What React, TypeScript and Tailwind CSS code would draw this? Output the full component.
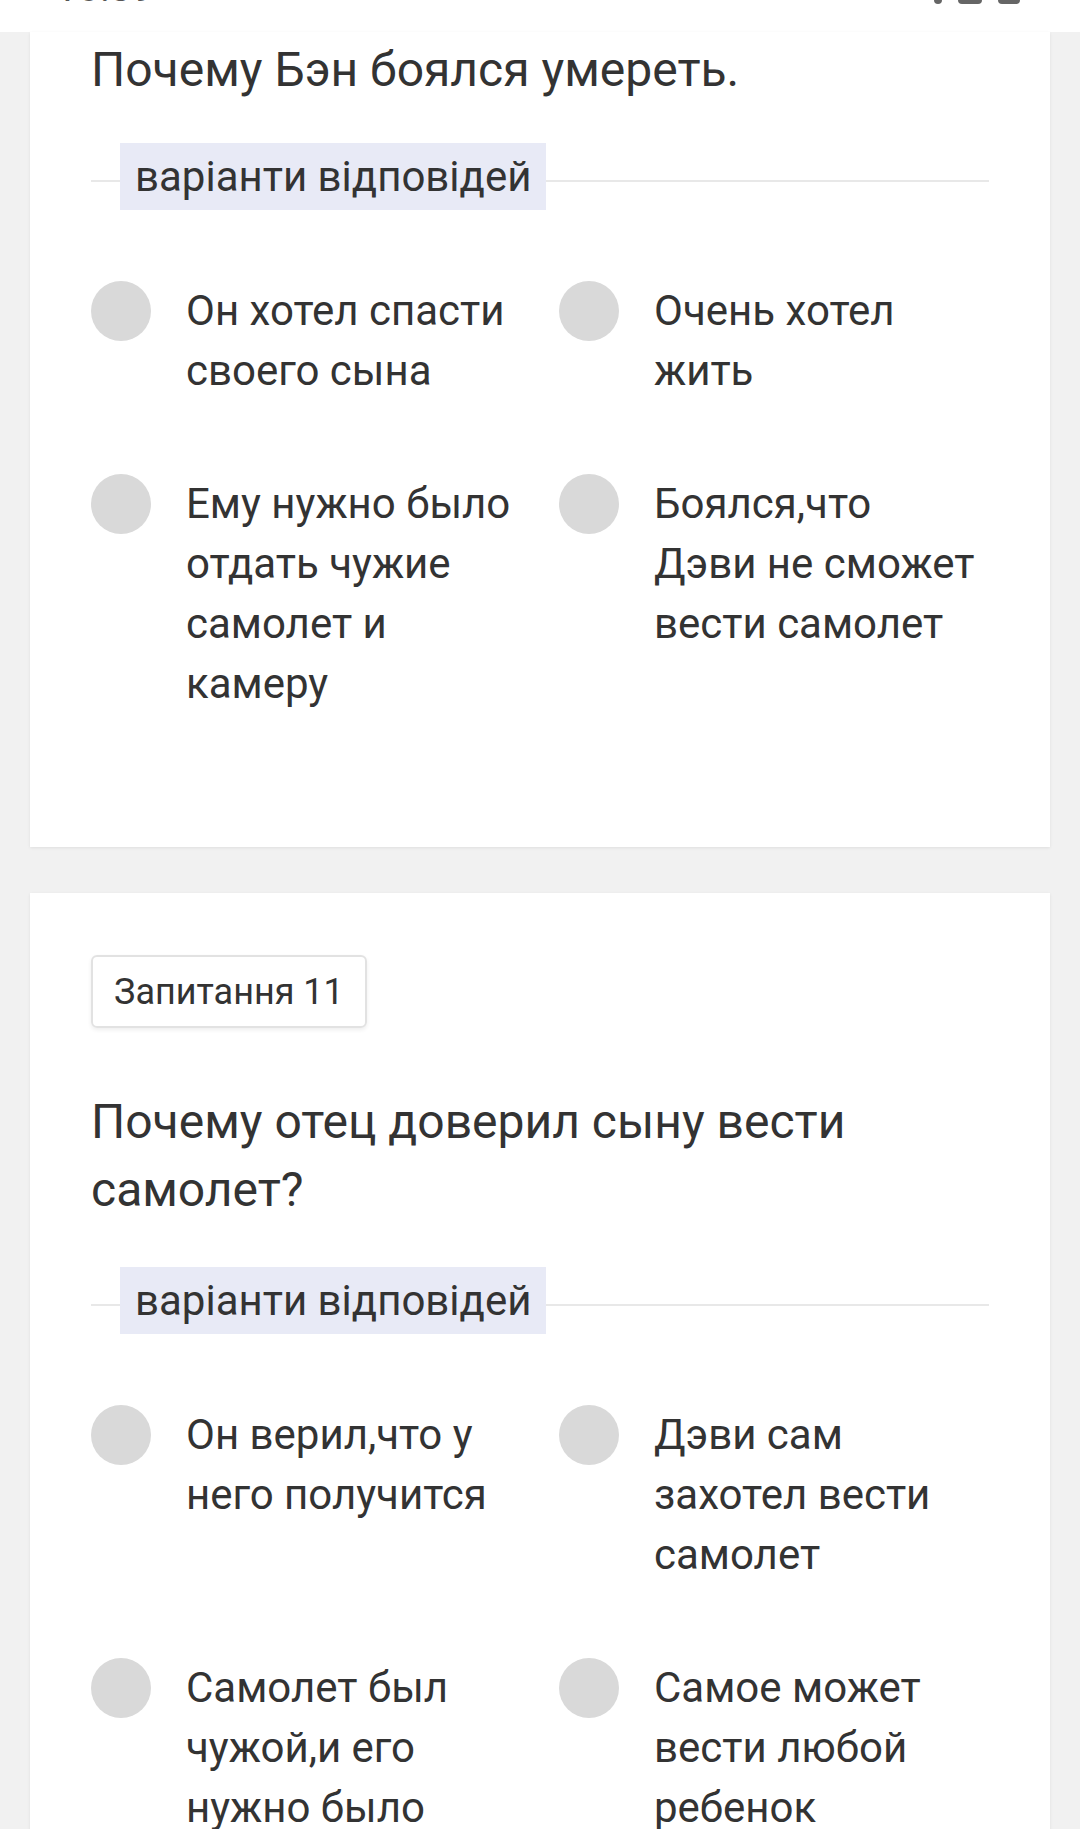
import React from 'react';

type Question = {
  badge?: string;
  title: string;
  options: string[];
};

const questions: Question[] = [
  {
    title: 'Почему Бэн боялся умереть.',
    options: [
      'Он хотел спасти своего сына',
      'Очень хотел жить',
      'Ему нужно было отдать чужие самолет и камеру',
      'Боялся,что Дэви не сможет вести самолет',
    ],
  },
  {
    badge: 'Запитання 11',
    title: 'Почему отец доверил сыну вести самолет?',
    options: [
      'Он верил,что у него получится',
      'Дэви сам захотел вести самолет',
      'Самолет был чужой,и его нужно было вернуть',
      'Самое может вести любой ребенок',
    ],
  },
];

function StatusBar() {
  return (
    <div className="h-[32px] bg-white overflow-hidden flex justify-between pl-[55px] pr-[60px]">
      <span className="text-[40px] leading-none text-[#555] -mt-[32px]">10:39</span>
      <div className="flex items-start gap-[16px] -mt-[12px]">
        <div className="w-[8px] h-[16px] bg-[#666] rounded-sm" />
        <div className="w-[24px] h-[16px] bg-[#666] rounded-sm" />
        <div className="w-[22px] h-[16px] bg-[#666] rounded-sm" />
      </div>
    </div>
  );
}

function Divider() {
  return (
    <div className="relative h-[67px]">
      <div className="absolute left-0 right-0 top-[37px] h-[2px] bg-[#e8e8e8]" />
      <div className="absolute left-[29px] top-0 h-[67px] bg-[#e8eaf6] px-[15px] flex items-center text-[42px] text-[#333]">
        варіанти відповідей
      </div>
    </div>
  );
}

function Option({ text, left }: { text: string; left: boolean }) {
  return (
    <div className="flex items-start gap-[35px]">
      <div className="w-[60px] h-[60px] rounded-full bg-[#d9d9d9] shrink-0" />
      <div className={`${left ? 'w-[345px]' : 'w-[323px]'} text-[42px] leading-[60px] text-[#333]`}>{text}</div>
    </div>
  );
}

function QuestionCard({ q, first }: { q: Question; first?: boolean }) {
  return (
    <div
      className={`bg-white mx-[30px] px-[61px] shadow-[0_1px_3px_rgba(0,0,0,0.08)] ${
        first ? 'pt-[4px]' : 'pt-[62px]'
      } pb-[133px]`}
    >
      {q.badge && (
        <div className="inline-flex items-center h-[73px] px-[21px] border-2 border-[#e2e2e2] rounded-[6px] shadow-[0_2px_4px_rgba(0,0,0,0.07)] text-[36px] text-[#333] mb-[60px]">
          {q.badge}
        </div>
      )}
      <h2 className="text-[48px] leading-[68px] text-[#333] font-normal">{q.title}</h2>
      <div className={first ? 'mt-[39px]' : 'mt-[43px]'}>
        <Divider />
      </div>
      <div className="grid grid-cols-[468px_1fr] gap-y-[73px] mt-[71px]">
        {q.options.map((o, i) => (
          <Option key={o} text={o} left={i % 2 === 0} />
        ))}
      </div>
    </div>
  );
}

export default function App() {
  return (
    <div className="w-[1080px] h-[1829px] overflow-hidden bg-[#f1f1f1] font-['Roboto',sans-serif]">
      <StatusBar />
      <div className="flex flex-col gap-[46px]">
        {questions.map((q, i) => (
          <QuestionCard key={i} q={q} first={i === 0} />
        ))}
      </div>
    </div>
  );
}
